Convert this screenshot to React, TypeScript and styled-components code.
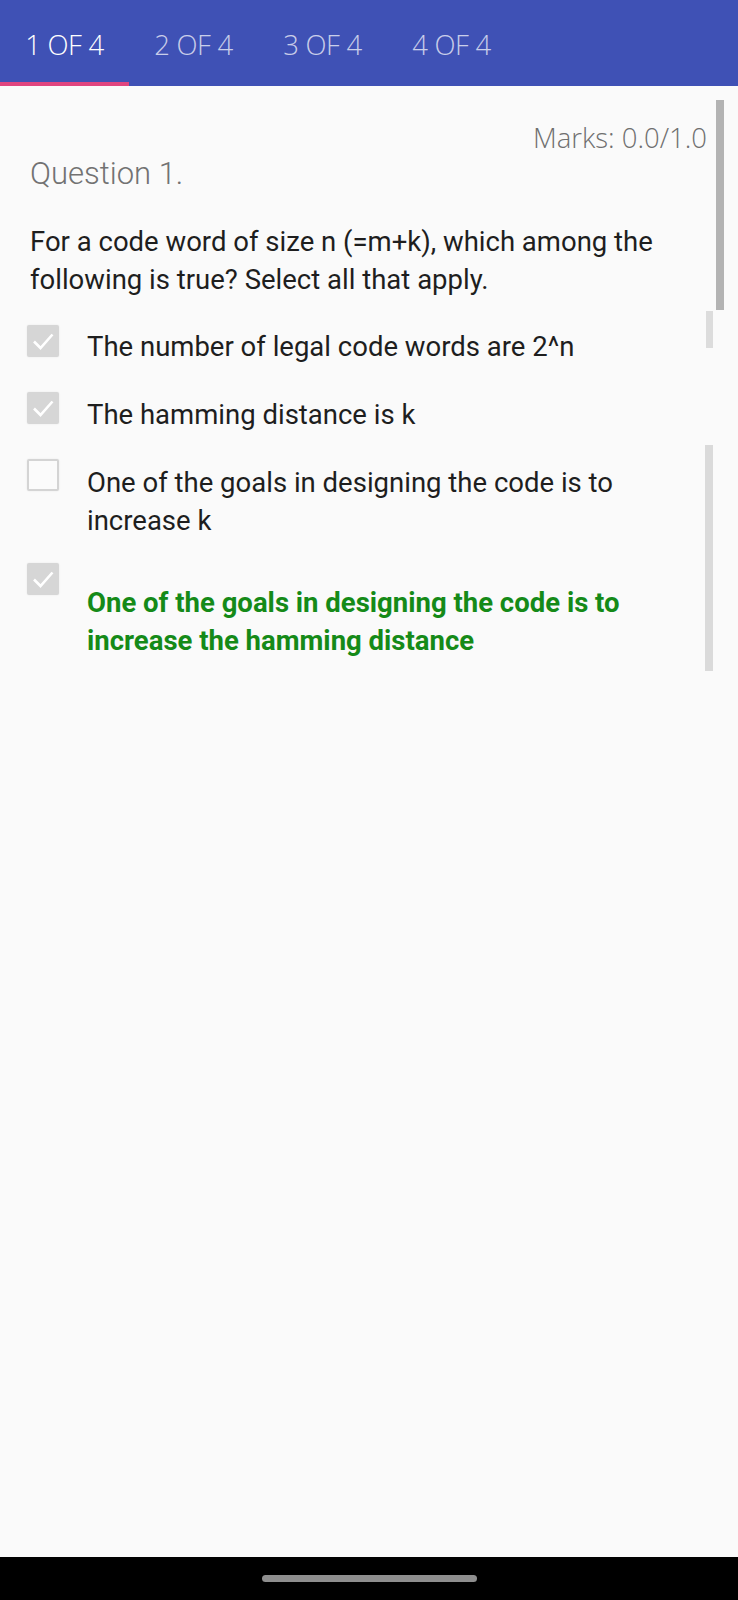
import React from "react";
import styled, { createGlobalStyle } from "styled-components";

const Global = createGlobalStyle`
  html, body { margin: 0; padding: 0; background: #fafafa; }
  body { font-family: Roboto, "Noto Sans", sans-serif; }
  * { box-sizing: border-box; }
`;

const Screen = styled.div`
  position: relative;
  width: 738px;
  height: 1600px;
  display: flex;
  flex-direction: column;
  background: #fafafa;
  overflow: hidden;
`;

const TabBar = styled.div`
  height: 86px;
  background: #3f51b5;
  display: flex;
  align-items: stretch;
  flex-shrink: 0;
`;

const Tab = styled.div<{ $active?: boolean }>`
  width: 129px;
  display: flex;
  align-items: center;
  justify-content: center;
  padding-top: 6px;
  font-family: "Open Sans", Lato, sans-serif;
  font-weight: 300;
  font-size: 27.5px;
  letter-spacing: -0.3px;
  color: ${(p) => (p.$active ? "#ffffff" : "rgba(255,255,255,0.72)")};
  border-bottom: 4px solid ${(p) => (p.$active ? "#e0457f" : "transparent")};
`;

const Content = styled.div`
  flex: 1;
  padding: 35px 30px 0 30px;
  display: flex;
  flex-direction: column;
`;

const Marks = styled.div`
  align-self: flex-end;
  margin-right: 1px;
  font-family: "Open Sans", Lato, sans-serif;
  font-weight: 300;
  font-size: 27.5px;
  color: #6f6f6f;
  line-height: 34px;
`;

const QuestionTitle = styled.div`
  font-family: Roboto, sans-serif;
  font-weight: 300;
  font-size: 31px;
  color: #727272;
  line-height: 38px;
`;

const QuestionText = styled.div`
  margin-top: 29.5px;
  font-family: Roboto, sans-serif;
  font-size: 27.5px;
  line-height: 38px;
  color: #1e1e1e;
  padding-right: 50px;
`;

const Options = styled.div`
  display: flex;
  flex-direction: column;
`;

const Option = styled.div<{ $mt: number }>`
  display: flex;
  align-items: flex-start;
  margin-top: ${(p) => p.$mt}px;
`;

const Box = styled.div<{ $checked?: boolean }>`
  width: 32px;
  height: 32px;
  margin-left: -3px;
  flex-shrink: 0;
  border-radius: 2px;
  display: flex;
  align-items: center;
  justify-content: center;
  background: ${(p) => (p.$checked ? "#d6d6d6" : "#fbfbfb")};
  border: ${(p) => (p.$checked ? "none" : "2px solid #d4d4d4")};
  box-shadow: 0 0 2px rgba(0, 0, 0, 0.08);
`;

const OptionText = styled.div<{ $correct?: boolean; $offset: number }>`
  margin-left: 28px;
  margin-top: ${(p) => p.$offset}px;
  font-family: Roboto, sans-serif;
  font-size: 27.5px;
  line-height: 38.5px;
  font-weight: ${(p) => (p.$correct ? 700 : 400)};
  color: ${(p) => (p.$correct ? "#158a18" : "#1e1e1e")};
  padding-right: 60px;
`;

const ScrollBar = styled.div<{ $x: number; $y: number; $h: number; $w: number; $c: string }>`
  position: absolute;
  left: ${(p) => p.$x}px;
  top: ${(p) => p.$y}px;
  width: ${(p) => p.$w}px;
  height: ${(p) => p.$h}px;
  background: ${(p) => p.$c};
`;

const NavBar = styled.div`
  height: 43px;
  background: #000;
  display: flex;
  justify-content: center;
  align-items: flex-start;
  padding-top: 18px;
  flex-shrink: 0;
`;

const Handle = styled.div`
  width: 215px;
  height: 7px;
  border-radius: 4px;
  background: #8e8e8e;
`;

const Check = () => (
  <svg width="24" height="24" viewBox="0 0 24 24">
    <path d="M3 12.5 L9.5 19 L21.5 5.5" fill="none" stroke="#ffffff" strokeWidth="2.6" />
  </svg>
);

const options = [
  { text: "The number of legal code words are 2^n", checked: true, mt: 26, off: 3 },
  { text: "The hamming distance is k", checked: true, mt: 26, off: 3.5 },
  { text: "One of the goals in designing the code is to increase k", checked: false, mt: 24.5, off: 5 },
  { text: "One of the goals in designing the code is to increase the hamming distance", checked: true, correct: true, mt: 22, off: 21 },
];

export default function App() {
  return (
    <Screen>
      <Global />
      <TabBar>
        <Tab $active>1 OF 4</Tab>
        <Tab>2 OF 4</Tab>
        <Tab>3 OF 4</Tab>
        <Tab>4 OF 4</Tab>
      </TabBar>
      <Content>
        <Marks>Marks: 0.0/1.0</Marks>
        <QuestionTitle>Question 1.</QuestionTitle>
        <QuestionText>
          For a code word of size n (=m+k), which among the following is true? Select all that apply.
        </QuestionText>
        <Options>
          {options.map((o, i) => (
            <Option key={i} $mt={o.mt}>
              <Box $checked={o.checked}>{o.checked && <Check />}</Box>
              <OptionText $correct={o.correct} $offset={o.off}>{o.text}</OptionText>
            </Option>
          ))}
        </Options>
      </Content>
      <ScrollBar $x={716} $y={100} $w={8} $h={210} $c="#b3b3b3" />
      <ScrollBar $x={706} $y={311} $w={7} $h={37} $c="#dcdcdc" />
      <ScrollBar $x={705} $y={445} $w={8} $h={226} $c="#dadada" />
      <NavBar>
        <Handle />
      </NavBar>
    </Screen>
  );
}
